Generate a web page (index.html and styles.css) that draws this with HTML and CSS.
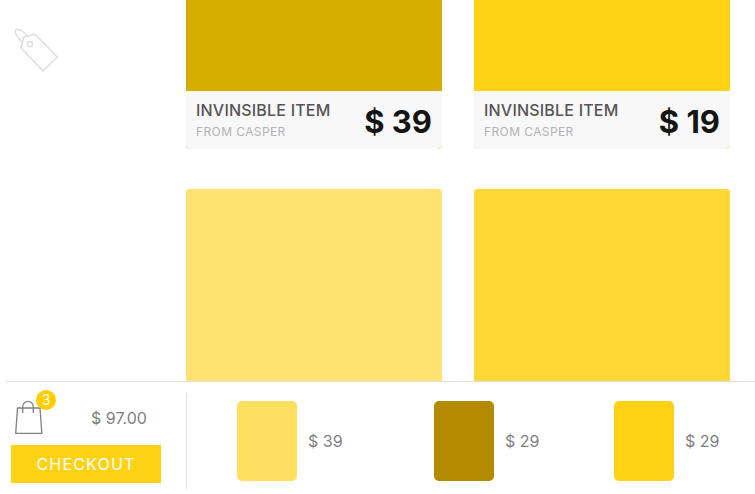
FILE: index.html
```html
<!DOCTYPE html>
<html lang="en">

<head>
  <meta charset="UTF-8">
  <meta name="viewport" content="width=device-width, initial-scale=1.0">
  <title>Shop</title>
  <link rel="stylesheet" href="styles.css">
</head>

<body>
  <div class="main">
    <aside class="sidebar">
      <svg class="tag-icon" width="46" height="46" viewBox="0 0 46 46" fill="none" stroke="#dedede" stroke-width="1.5">
        <path d="M22 6.2 L10.5 9 L8 20 L30 43 L44.3 29 Z" stroke-linejoin="round"/>
        <circle cx="17" cy="16" r="2.6"/>
        <path d="M15 8.5 C10 2.5 4.5 0.5 2.8 2 C1 4 4 9.5 9.5 14"/>
      </svg>
    </aside>
    <div class="products">
      <div class="card c-dark">
        <div class="card-img"></div>
        <div class="card-info">
          <div>
            <h3>INVINSIBLE ITEM</h3>
            <p>FROM CASPER</p>
          </div>
          <strong>$ 39</strong>
        </div>
      </div>
      <div class="card c-yellow">
        <div class="card-img"></div>
        <div class="card-info">
          <div>
            <h3>INVINSIBLE ITEM</h3>
            <p>FROM CASPER</p>
          </div>
          <strong>$ 19</strong>
        </div>
      </div>
      <div class="card c-light">
        <div class="card-img"></div>
      </div>
      <div class="card c-mid">
        <div class="card-img"></div>
      </div>
    </div>
  </div>

  <div class="cart">
    <div class="summary">
      <div class="summary-top">
        <div class="bag">
          <svg width="28" height="34" viewBox="0 0 28 34" fill="none" stroke="#808080" stroke-width="1.3">
            <path d="M2.5 8 H25 L26.8 33.3 H0.7 Z"/>
            <path d="M7.7 13 V7 C7.7 -0.5 18.3 -0.5 18.3 7 V13"/>
          </svg>
          <span class="badge">3</span>
        </div>
        <span class="total">$ 97.00</span>
      </div>
      <a class="checkout" href="javascript:;">CHECKOUT</a>
    </div>
    <ul class="cart-items">
      <li><span class="thumb t-light"></span><span>$ 39</span></li>
      <li><span class="thumb t-dark"></span><span>$ 29</span></li>
      <li><span class="thumb t-yellow"></span><span>$ 29</span></li>
    </ul>
  </div>
</body>

</html>
```

FILE: styles.css
```css
* {
  padding: 0;
  margin: 0;
  box-sizing: border-box;
}

body {
  height: 494px;
  overflow: hidden;
  background: #fff;
  font-family: Inter, "Liberation Sans", sans-serif;
}

.main {
  height: 381px;
  overflow: hidden;
  display: flex;
}

.sidebar {
  width: 186px;
  flex-shrink: 0;
  padding: 28px 0 0 13px;
}

.tag-icon {
  display: block;
}

/* scrolled list, first row is partly above the fold */
.products {
  display: grid;
  grid-template-columns: 256px 256px;
  column-gap: 32px;
  row-gap: 40px;
  align-content: start;
  margin-top: -149px;
}

.card {
  height: 298px;
  border-radius: 4px;
  overflow: hidden;
}

.card-img {
  height: 240px;
}

.card-info {
  height: 58px;
  background: #f8f8f8;
  border-radius: 0 0 4px 4px;
  padding: 0 10px;
  display: flex;
  justify-content: space-between;
  align-items: center;
}

.card-info h3 {
  font-size: 16px;
  line-height: 20px;
  font-weight: 500;
  letter-spacing: 0.2px;
  color: #555;
  margin-bottom: 4px;
}

.card-info p {
  font-size: 12px;
  line-height: 16px;
  letter-spacing: 0.4px;
  color: #b3b3b3;
}

.card-info strong {
  font-size: 31px;
  font-weight: 700;
  color: #151515;
  margin-top: 2px;
}

.c-dark,
.c-dark .card-img {
  background: #d6ae00;
}

.c-yellow,
.c-yellow .card-img {
  background: #ffd215;
}

.c-light,
.c-light .card-img {
  background: #ffe270;
}

.c-mid,
.c-mid .card-img {
  background: #ffd836;
}

.cart {
  height: 113px;
  margin-left: 6px;
  border-top: solid 1px #e0e0e0;
  display: flex;
  align-items: flex-start;
  padding-top: 11px;
}

.summary {
  width: 181px;
  height: 96px;
  border-right: solid 1px #e0e0e0;
  padding-left: 5px;
}

.summary-top {
  display: flex;
  height: 52px;
  padding: 0 0 11px 4px;
  align-items: flex-end;
}

.bag {
  position: relative;
  width: 28px;
  height: 34px;
}

.bag svg {
  display: block;
}

.badge {
  position: absolute;
  top: -10px;
  left: 21px;
  width: 20px;
  height: 20px;
  border-radius: 50%;
  background: #ffce00;
  color: #fff;
  font-size: 14px;
  line-height: 20px;
  text-align: center;
}

.total {
  margin-left: 48px;
  margin-bottom: 6px;
  font-size: 16px;
  color: #808080;
}

.checkout {
  display: block;
  width: 150px;
  height: 38px;
  background: #ffd215;
  color: #fff;
  font-size: 16px;
  line-height: 38px;
  letter-spacing: 1.2px;
  text-align: center;
  text-decoration: none;
}

.cart-items {
  list-style: none;
  display: flex;
  padding-top: 8px;
  padding-left: 50px;
}

.cart-items li {
  display: flex;
  align-items: center;
  gap: 11px;
  font-size: 16px;
  color: #808080;
}

.cart-items li:nth-child(1) {
  width: 197px;
}

.cart-items li:nth-child(2) {
  width: 180px;
}

.thumb {
  display: block;
  width: 60px;
  height: 80px;
  border-radius: 5px;
}

.t-light {
  background: #ffdf60;
}

.t-dark {
  background: #b38b00;
}

.t-yellow {
  background: #ffd215;
}
```
